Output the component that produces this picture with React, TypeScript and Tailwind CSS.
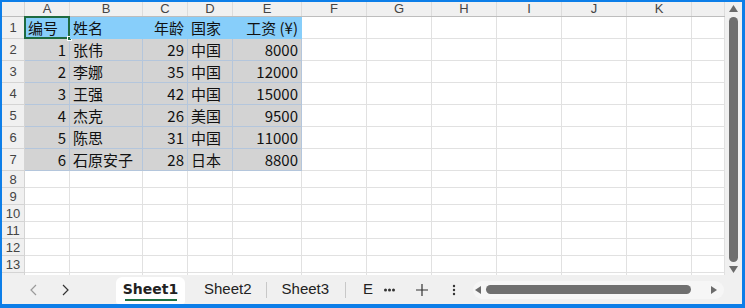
import React from 'react';

const cols = [
  { key: 'A', w: 'w-[45px]' },
  { key: 'B', w: 'w-[73px]' },
  { key: 'C', w: 'w-[45px]' },
  { key: 'D', w: 'w-[45px]' },
  { key: 'E', w: 'w-[69px]' },
  { key: 'F', w: 'w-[65px]' },
  { key: 'G', w: 'w-[65px]' },
  { key: 'H', w: 'w-[65px]' },
  { key: 'I', w: 'w-[65px]' },
  { key: 'J', w: 'w-[65px]' },
  { key: 'K', w: 'w-[65px]' },
  { key: '', w: 'w-[33px]' },
];

const header = ['编号', '姓名', '年龄', '国家', '工资 (¥)'];
const rows: (string | number)[][] = [
  [1, '张伟', 29, '中国', 8000],
  [2, '李娜', 35, '中国', 12000],
  [3, '王强', 42, '中国', 15000],
  [4, '杰克', 26, '美国', 9500],
  [5, '陈思', 31, '中国', 11000],
  [6, '石原安子', 28, '日本', 8800],
];

const font = "font-['Noto_Sans_CJK_SC','Liberation_Sans',sans-serif]";

function HeaderRow() {
  return (
    <div className="flex h-[15px] border-b border-[#bdbdbd] bg-[#f0f0f0] text-[13px] leading-[14px] text-[#444] font-['Liberation_Sans',sans-serif]">
      <div className="w-[23px] border-r border-[#d4d4d4]" />
      {cols.map((c, i) => (
        <div
          key={i}
          className={`${c.w} shrink-0 border-r border-[#dcdcdc] text-center`}
        >
          {c.key}
        </div>
      ))}
    </div>
  );
}

function RowNum({ n, h }: { n?: number; h: string }) {
  return (
    <div
      className={`w-[23px] shrink-0 ${h} border-r border-b border-[#d4d4d4] bg-[#f0f0f0] text-center text-[13px] leading-none text-[#444] font-['Liberation_Sans',sans-serif] flex items-center justify-center`}
    >
      {n}
    </div>
  );
}

export default function App() {
  return (
    <div
      className={`w-[745px] h-[308px] overflow-hidden border-t-2 border-l-2 border-r-[3px] border-b-4 border-[#0d7ee8] bg-white flex flex-col ${font}`}
    >
      <div className="flex flex-1 min-h-0">
        <div className="w-[723px] overflow-hidden">
          <HeaderRow />
          {/* row 1: headers */}
          <div className="flex h-[22px]">
            <RowNum n={1} h="h-[22px]" />
            {cols.map((c, i) => (
              <div
                key={i}
                className={`${c.w} shrink-0 h-[22px] border-r border-b text-[15px] leading-[22px] px-[3px] ${
                  i < 5 ? 'bg-[#87cefa] border-[#87cefa]' : 'border-[#e1e1e1]'
                } ${i === 2 || i === 4 ? 'text-right' : ''} text-[#111] relative`}
              >
                {i < 5 ? header[i] : ''}
                {i === 0 && (
                  <>
                    <div className="absolute -left-[1px] -top-[1px] w-[46px] h-[23px] border-2 border-[#1e6b41]" />
                    <div className="absolute -right-[3px] -bottom-[3px] w-[5px] h-[5px] bg-[#1e6b41] border border-white" />
                  </>
                )}
              </div>
            ))}
          </div>
          {rows.map((r, ri) => (
            <div key={ri} className="flex h-[22px]">
              <RowNum n={ri + 2} h="h-[22px]" />
              {cols.map((c, i) => (
                <div
                  key={i}
                  className={`${c.w} shrink-0 h-[22px] border-r border-b text-[15px] leading-[22px] px-[3px] text-[#111] ${
                    i < 5 ? 'bg-[#d3d3d3] border-[#b4c6dc]' : 'border-[#e1e1e1]'
                  } ${typeof r[i] === 'number' ? 'text-right' : ''}`}
                >
                  {i < 5 ? r[i] : ''}
                </div>
              ))}
            </div>
          ))}
          {[8, 9, 10, 11, 12, 13, 0].map((n) => (
            <div key={n} className="flex h-[17px]">
              <RowNum n={n || undefined} h="h-[17px]" />
              {cols.map((c, i) => (
                <div
                  key={i}
                  className={`${c.w} shrink-0 h-[17px] border-r border-b border-[#e1e1e1]`}
                />
              ))}
            </div>
          ))}
        </div>
        {/* vertical scrollbar */}
        <div className="w-[17px] bg-[#f0f0f0] flex flex-col items-center pt-[3px] pb-[2px]">
          <svg width="9" height="7" viewBox="0 0 9 7">
            <path d="M4.5 0 L9 7 L0 7 Z" fill="#6b6b6b" />
          </svg>
          <div className="w-[9px] flex-1 mt-[5px] mb-[4px] rounded-full bg-[#6f6f6f]" />
          <svg width="9" height="7" viewBox="0 0 9 7">
            <path d="M0 0 L9 0 L4.5 7 Z" fill="#6b6b6b" />
          </svg>
        </div>
      </div>
      {/* tab bar */}
      <div className="h-[29px] shrink-0 bg-[#f0f0f0] flex items-center text-[15px] text-[#222] font-['Liberation_Sans',sans-serif]">
        <div className="w-[114px] flex items-center pl-[26px] gap-[19px]">
          <svg width="12" height="12" viewBox="0 0 12 12">
            <path d="M8 1 L3 6 L8 11" fill="none" stroke="#9a9a9a" strokeWidth="1.2" />
          </svg>
          <svg width="12" height="12" viewBox="0 0 12 12">
            <path d="M4 1 L9 6 L4 11" fill="none" stroke="#333" strokeWidth="1.2" />
          </svg>
        </div>
        <div className="h-[27px] mt-[2px] w-[69px] bg-white rounded-t-[6px] rounded-b-[3px] flex flex-col items-center justify-center">
          <span className="font-bold text-[14px] leading-[17px] font-['DejaVu_Sans',sans-serif]">Sheet1</span>
          <div className="w-[52px] h-[2px] bg-[#1e7145] mt-[1px]" />
        </div>
        <div className="w-[19px]" />
        <span>Sheet2</span>
        <div className="w-px h-[16px] bg-[#c8c8c8] ml-[14px] mr-[15px]" />
        <span>Sheet3</span>
        <div className="w-px h-[16px] bg-[#c8c8c8] ml-[16px] mr-[17px]" />
        <span>E</span>
        <svg className="ml-[11px]" width="11" height="4" viewBox="0 0 11 4">
          <circle cx="1.5" cy="2" r="1.5" fill="#333" />
          <circle cx="5.5" cy="2" r="1.5" fill="#333" />
          <circle cx="9.5" cy="2" r="1.5" fill="#333" />
        </svg>
        <svg className="ml-[21px]" width="12" height="12" viewBox="0 0 12 12">
          <path d="M6 0 V12 M0 6 H12" stroke="#333" strokeWidth="1.2" />
        </svg>
        <svg className="ml-[24px]" width="4" height="12" viewBox="0 0 4 12">
          <circle cx="2" cy="2" r="1.2" fill="#333" />
          <circle cx="2" cy="6" r="1.2" fill="#333" />
          <circle cx="2" cy="10" r="1.2" fill="#333" />
        </svg>
        <div className="ml-[17px] flex-1 mr-[18px] h-[18px] bg-[#f6f6f6] rounded-full flex items-center pl-[2px] pr-[7px]">
          <svg width="6" height="8" viewBox="0 0 6 8">
            <path d="M6 0 V8 L0 4 Z" fill="#6b6b6b" />
          </svg>
          <div className="ml-[5px] w-[205px] h-[9px] rounded-full bg-[#6f6f6f]" />
          <div className="flex-1" />
          <svg width="6" height="8" viewBox="0 0 6 8">
            <path d="M0 0 V8 L6 4 Z" fill="#6b6b6b" />
          </svg>
        </div>
      </div>
    </div>
  );
}
